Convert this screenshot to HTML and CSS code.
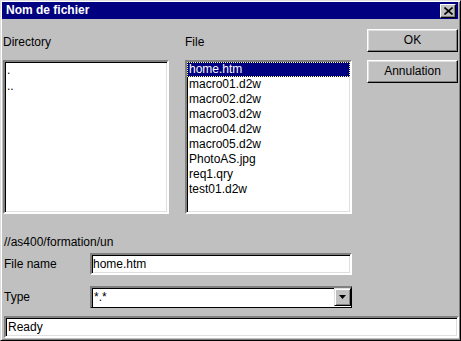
FILE: index.html
```html
<!DOCTYPE html>
<html>
<head>
<meta charset="utf-8">
<link rel="stylesheet" href="styles.css">
</head>
<body>
<div class="window">
  <div class="titlebar">
    <span class="title">Nom de fichier</span>
    <span class="close">
      <svg width="9" height="8" viewBox="0 0 9 8"><path d="M0.5 0.5 L8.5 7.5 M8.5 0.5 L0.5 7.5" stroke="#000" stroke-width="1.6" fill="none"/></svg>
    </span>
  </div>
  <div class="main">
    <div class="top">
      <div class="col dircol">
        <div class="label">Directory</div>
        <div class="list dirlist">
          <div class="item">.</div>
          <div class="item">..</div>
        </div>
      </div>
      <div class="col filecol">
        <div class="label">File</div>
        <div class="list filelist">
          <div class="item sel">home.htm</div>
          <div class="item">macro01.d2w</div>
          <div class="item">macro02.d2w</div>
          <div class="item">macro03.d2w</div>
          <div class="item">macro04.d2w</div>
          <div class="item">macro05.d2w</div>
          <div class="item">PhotoAS.jpg</div>
          <div class="item">req1.qry</div>
          <div class="item">test01.d2w</div>
        </div>
      </div>
      <div class="buttons">
        <div class="btn">OK</div>
        <div class="btn">Annulation</div>
      </div>
    </div>
    <div class="path">//as400/formation/un</div>
    <div class="row namerow">
      <div class="rlabel">File name</div>
      <div class="field">home.htm</div>
    </div>
    <div class="row typerow">
      <div class="rlabel">Type</div>
      <div class="field combo">
        <span class="ctext">*.*</span>
        <span class="dropbtn"><svg width="7" height="4" viewBox="0 0 7 4"><path d="M0 0 H7 L3.5 4 Z" fill="#000"/></svg></span>
      </div>
    </div>
    <div class="status">Ready</div>
  </div>
</div>
</body>
</html>
```

FILE: styles.css
```css
* { box-sizing: border-box; }
html, body { margin: 0; padding: 0; background: #c0c0c0; }
body {
  font-family: "Liberation Sans", Arial, sans-serif;
  font-size: 12px;
  color: #000;
}
.window {
  width: 461px;
  height: 341px;
  background: #c0c0c0;
  border: 1px solid;
  border-color: #dfdfdf #000 #000 #dfdfdf;
  padding: 1px 2px 2px 1px;
  box-shadow: inset 1px 1px #fff, inset -1px -1px #808080;
  display: flex;
  flex-direction: column;
}
.titlebar {
  height: 17px;
  background: #000080;
  color: #fff;
  display: flex;
  align-items: flex-start;
  justify-content: space-between;
  padding: 0 2px 0 4px;
}
.title {
  font-weight: bold;
  font-size: 12px;
  line-height: 17px;
}
.close {
  margin-top: 2px;
  width: 16px;
  height: 14px;
  background: #c0c0c0;
  border: 1px solid;
  border-color: #fff #000 #000 #fff;
  box-shadow: inset -1px -1px #808080;
  display: flex;
  align-items: center;
  justify-content: center;
  padding-bottom: 1px;
}
.close svg { display: block; }
.main {
  flex: 1;
  display: flex;
  flex-direction: column;
  padding-left: 1px;
}
.top { display: flex; }
.col { display: flex; flex-direction: column; }
.dircol { width: 166px; }
.filecol { width: 167px; margin-left: 16px; }
.label {
  height: 41px;
  padding-top: 16px;
  line-height: 14px;
}
.list {
  height: 154px;
  background: #fff;
  border: 2px solid;
  border-color: #808080 #fff #fff #808080;
  box-shadow: inset 1px 1px #000, inset -1px -1px #dfdfdf;
  padding: 0;
  overflow: hidden;
}
.item {
  line-height: 15px;
  height: 15px;
  padding-left: 2px;
  white-space: nowrap;
}
.dirlist .item { line-height: 16px; height: 16px; }
.item.sel {
  background: #000080;
  color: #fff;
  outline: 1px dotted #ffff80;
  outline-offset: -1px;
}
.buttons {
  margin-left: 15px;
  width: 91px;
  padding-top: 10px;
  display: flex;
  flex-direction: column;
  gap: 8px;
}
.btn {
  height: 23px;
  border: 1px solid;
  border-color: #fff #000 #000 #fff;
  box-shadow: inset -1px -1px #808080, inset 1px 1px #dfdfdf;
  text-align: center;
  line-height: 21px;
}
.path {
  margin-top: 21px;
  line-height: 14px;
  height: 14px;
  padding-left: 1px;
}
.row {
  display: flex;
  align-items: center;
  padding-left: 1px;
}
.namerow { margin-top: 4px; }
.typerow { margin-top: 11px; }
.rlabel { width: 86px; }
.field {
  width: 262px;
  height: 22px;
  background: #fff;
  border: 2px solid;
  border-color: #808080 #fff #fff #808080;
  box-shadow: inset 1px 1px #000, inset -1px -1px #dfdfdf;
  padding-left: 1px;
  line-height: 18px;
}
.combo {
  display: flex;
  justify-content: space-between;
  border-color: #808080 #000 #000 #808080;
  border-width: 2px 1px 1px 2px;
  box-shadow: inset 1px 1px #000;
  padding-left: 2px;
  padding-right: 0;
}
.ctext { line-height: 19px; }
.dropbtn {
  width: 17px;
  height: 18px;
  margin-top: 0;
  background: #c0c0c0;
  border: 1px solid;
  border-color: #dfdfdf #000 #000 #dfdfdf;
  box-shadow: inset 1px 1px #fff, inset -1px -1px #808080;
  display: flex;
  align-items: center;
  justify-content: center;
}
.dropbtn svg { display: block; }
.status {
  margin-top: 8px;
  margin-left: 1px;
  width: 455px;
  height: 22px;
  background: #fff;
  border: 2px solid;
  border-color: #808080 #fff #fff #808080;
  box-shadow: inset 1px 1px #000, inset -1px -1px #dfdfdf;
  padding-left: 2px;
  line-height: 18px;
}
```
